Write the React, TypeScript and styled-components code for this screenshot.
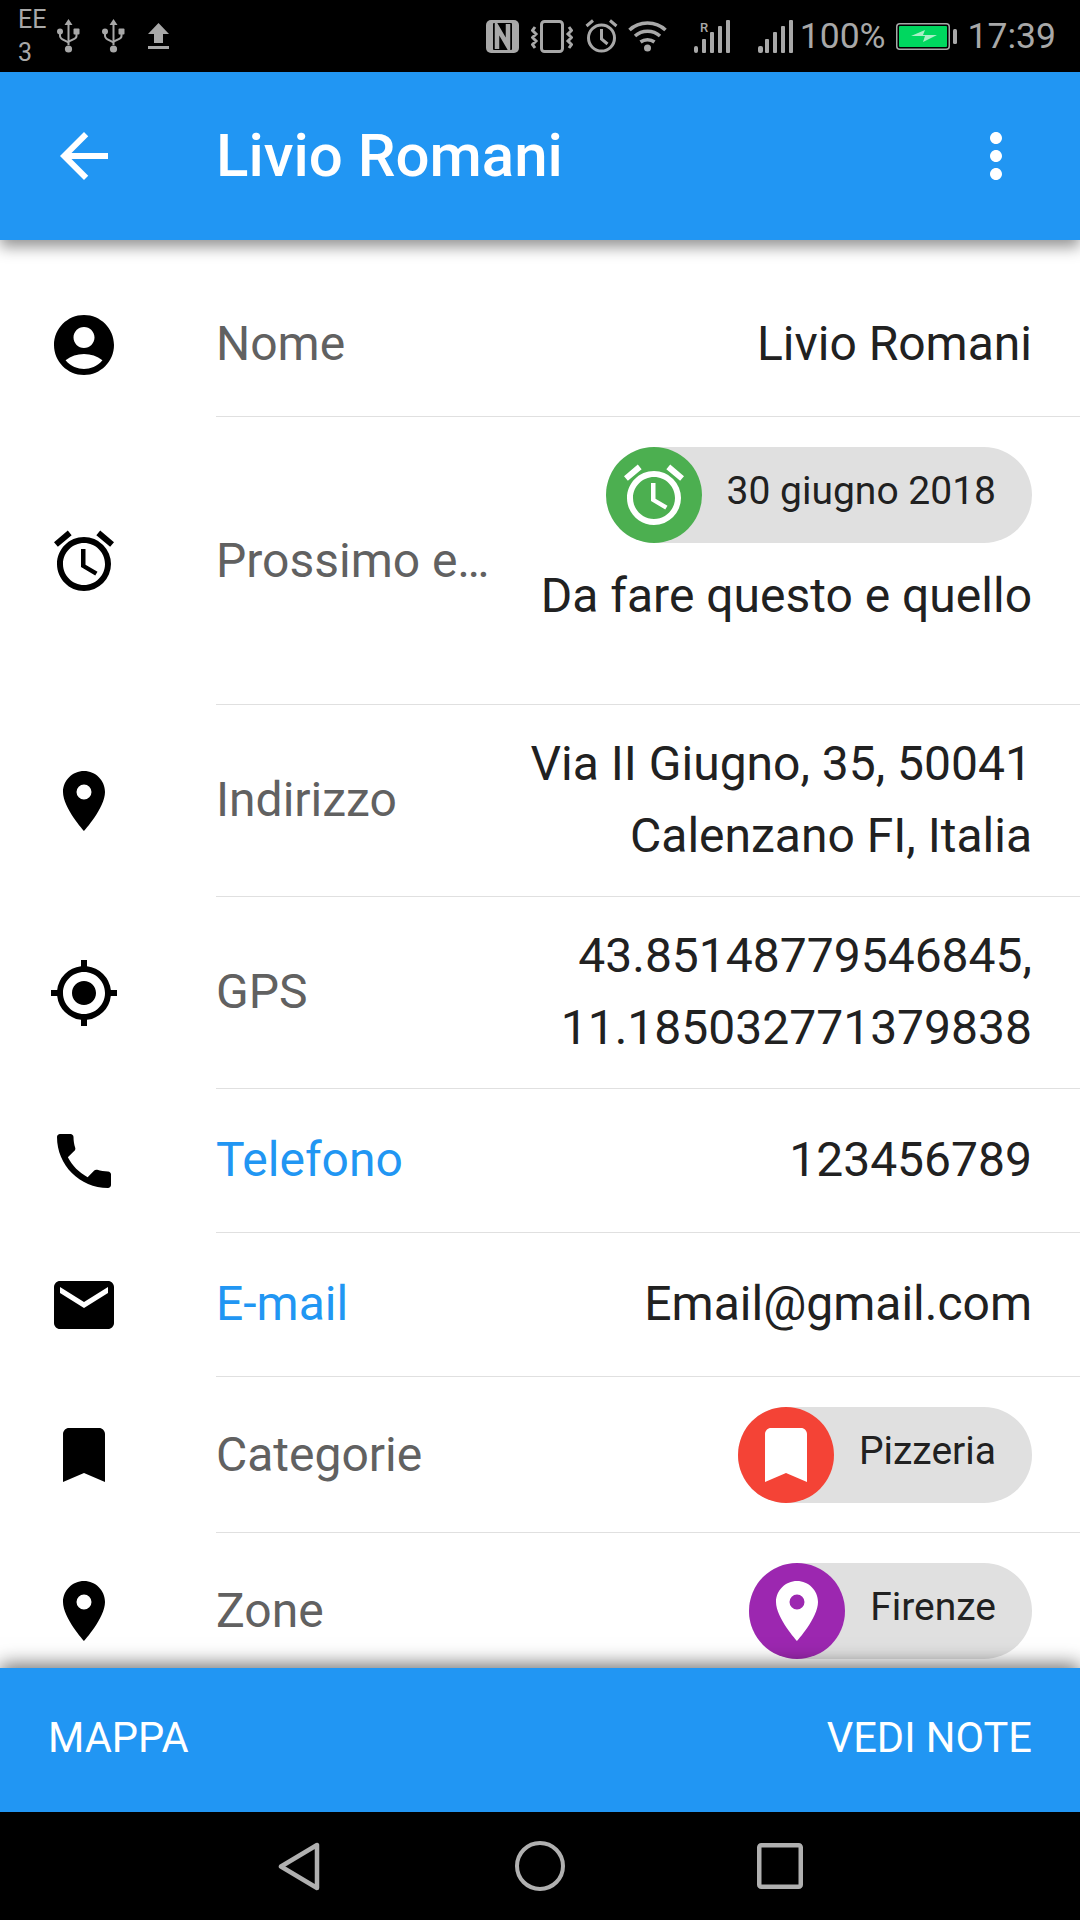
import React from 'react';
import styled, { createGlobalStyle } from 'styled-components';
import {
  MdAccessAlarm,
  MdAccountCircle,
  MdArrowBack,
  MdBookmark,
  MdEmail,
  MdGpsFixed,
  MdMoreVert,
  MdPhone,
  MdPlace,
} from 'react-icons/md';

const GlobalStyle = createGlobalStyle`
  html, body {
    margin: 0;
    padding: 0;
    background: #fff;
  }
  * {
    box-sizing: border-box;
  }
`;

const Screen = styled.div`
  width: 1080px;
  height: 1920px;
  display: flex;
  flex-direction: column;
  overflow: hidden;
  font-family: Roboto, 'Liberation Sans', sans-serif;
  background: #fff;
`;

const StatusBar = styled.div`
  height: 72px;
  flex: none;
  display: flex;
  align-items: center;
  justify-content: space-between;
  background: #000;
  color: #a8a8a8;
  padding: 0 24px 0 18px;
`;

const StatusGroup = styled.div`
  display: flex;
  align-items: center;
`;

const Carrier = styled.div`
  font-size: 25px;
  line-height: 33px;
  width: 39px;
`;

const StatusText = styled.span<{ $ml: number }>`
  font-size: 35.5px;
  line-height: 36px;
  margin-left: ${(p) => p.$ml}px;
`;

const StatusIcon = styled.svg<{ $ml: number }>`
  display: block;
  flex: none;
  margin-left: ${(p) => p.$ml}px;
`;

const AppBar = styled.header`
  height: 168px;
  flex: none;
  display: flex;
  align-items: center;
  background: #2196f3;
  color: #fff;
  padding: 0 48px;
  position: relative;
  z-index: 2;
  box-shadow: 0 7px 14px rgba(0, 0, 0, 0.42);
`;

const Title = styled.h1`
  flex: 1;
  margin: 0 0 0 96px;
  font-size: 60px;
  font-weight: 500;
  line-height: 72px;
`;

const List = styled.main`
  flex: 1;
  min-height: 0;
  overflow: hidden;
  padding-top: 32px;
`;

const Row = styled.div`
  display: flex;
  align-items: stretch;
`;

const IconCell = styled.div`
  width: 216px;
  flex: none;
  display: flex;
  align-items: center;
  padding-left: 48px;
  font-size: 72px;
  color: #000;

  svg {
    display: block;
  }
`;

const RowBody = styled.div<{ $pad: string; $last?: boolean }>`
  flex: 1;
  min-width: 0;
  display: flex;
  align-items: center;
  padding: ${(p) => p.$pad};
  padding-right: 48px;
  border-bottom: ${(p) => (p.$last ? 'none' : '1px solid #e0e0e0')};
`;

const Label = styled.div<{ $link?: boolean }>`
  width: 280px;
  flex: none;
  font-size: 48px;
  line-height: 72px;
  white-space: nowrap;
  overflow: hidden;
  text-overflow: ellipsis;
  color: ${(p) => (p.$link ? '#2196f3' : '#616161')};
`;

const Values = styled.div`
  flex: 1;
  min-width: 0;
  display: flex;
  flex-direction: column;
  align-items: flex-end;
  gap: 17px;
`;

const Value = styled.div`
  font-size: 48px;
  line-height: 72px;
  color: #212121;
  text-align: right;
`;

const EventNote = styled(Value)`
  margin-bottom: 42px;
`;

const Chip = styled.div`
  height: 96px;
  display: flex;
  align-items: center;
  border-radius: 48px;
  background: #e0e0e0;
  padding-right: 36px;
`;

const ChipAvatar = styled.div<{ $color: string }>`
  width: 96px;
  height: 96px;
  flex: none;
  display: flex;
  align-items: center;
  justify-content: center;
  border-radius: 50%;
  background: ${(p) => p.$color};
  color: #fff;
  font-size: 72px;
  margin-right: 25px;

  svg {
    display: block;
  }
`;

const ChipText = styled.span`
  font-size: 39px;
  line-height: 48px;
  color: #212121;
  padding-bottom: 8px;
  white-space: nowrap;
`;

const BottomBar = styled.footer`
  height: 144px;
  flex: none;
  display: flex;
  align-items: center;
  justify-content: space-between;
  background: #2196f3;
  color: #fff;
  padding: 0 48px 6px;
  font-size: 41.6px;
  position: relative;
  z-index: 2;
  box-shadow: 0 -4px 18px rgba(0, 0, 0, 0.55);
`;

const NavBar = styled.nav`
  height: 108px;
  flex: none;
  display: flex;
  align-items: center;
  background: #000;
  padding: 0 0 0 278px;
  position: relative;
  z-index: 3;
`;

const grey = '#a8a8a8';

const UsbIcon = ({ ml }: { ml: number }) => (
  <StatusIcon $ml={ml} width="23" height="34" viewBox="0 0 23 34" fill={grey}>
    <path d="M11.5 0l4 6h-3v20h-2V6h-3z" />
    <circle cx="11.5" cy="30" r="3.6" />
    <circle cx="3" cy="12.5" r="3" />
    <rect x="16.5" y="9.5" width="6" height="6" rx="1" />
    <path d="M2 14h2v2.5c0 1.5.8 2.3 2 3l5 2.500v2.300l-6-3C3 19.800 2 18.500 2 16.500zM18.500 14h2v3c0 1.800-1 3-2.800 3.800L12 23.500v-2.300l4.800-2.300c1.200-.6 1.700-1.200 1.700-2.400z" />
  </StatusIcon>
);

const StatusLeft = () => (
  <StatusGroup>
    <Carrier>
      EE
      <br />3
    </Carrier>
    <UsbIcon ml={0} />
    <UsbIcon ml={22} />
    <StatusIcon $ml={23} width="21" height="26" viewBox="0 0 21 26" fill={grey}>
      <path d="M10.500 0L21 11h-6v9H6v-9H0z" />
      <rect y="23" width="21" height="3" />
    </StatusIcon>
  </StatusGroup>
);

const StatusRight = () => (
  <StatusGroup>
    <StatusIcon $ml={0} width="33" height="33" viewBox="0 0 33 33">
      <rect width="33" height="33" rx="5" fill={grey} />
      <rect x="7" y="3" width="19" height="27" rx="1" fill="#000" />
      <path d="M11 29V7l11 19V4" stroke={grey} strokeWidth="4.500" fill="none" />
    </StatusIcon>
    <StatusIcon $ml={12} width="42" height="33" viewBox="0 0 42 33" fill="none" stroke={grey} strokeWidth="3">
      <rect x="10.500" y="1.500" width="21" height="30" rx="3" />
      <path d="M4 7L1.500 10.500 5 14l-3.500 3.500L5 21l-3.500 3.500L4 28M38 7l2.500 3.500L37 14l3.500 3.500L37 21l3.500 3.500L38 28" />
    </StatusIcon>
    <StatusIcon $ml={12} width="33" height="34" viewBox="0 0 33 34" fill="none" stroke={grey} strokeWidth="3">
      <circle cx="16.500" cy="19" r="13" />
      <path d="M16.500 10v10l6 5M1.500 7L8 1.500M31.500 7L25 1.500" />
    </StatusIcon>
    <StatusIcon $ml={10} width="39" height="32" viewBox="0 0 39 32" fill="none" stroke={grey} strokeWidth="3.500">
      <path d="M1.500 10C11 .5 28 .5 37.500 10M7 16c7-6.500 18-6.500 25 0M12.500 22c4-3 10-3 14 0" />
      <circle cx="19.500" cy="28" r="3.500" fill={grey} stroke="none" />
    </StatusIcon>
    <StatusIcon $ml={27} width="36" height="33" viewBox="0 0 36 33" fill={grey}>
      <text x="6" y="12" fontSize="13" fontWeight="500" fontFamily="Roboto, sans-serif">R</text>
      <rect y="26" width="4" height="7" rx="2" />
      <rect x="8" y="19" width="4" height="14" rx="1" />
      <rect x="16" y="12" width="4" height="21" rx="1" />
      <rect x="24" y="6" width="4" height="27" rx="1" />
      <rect x="32" y="0" width="4" height="33" rx="1" />
    </StatusIcon>
    <StatusIcon $ml={28} width="35" height="33" viewBox="0 0 35 33" fill={grey}>
      <rect y="26" width="5" height="7" rx="2" />
      <rect x="7" y="19" width="4" height="14" rx="1" />
      <rect x="15" y="12" width="4" height="21" rx="1" />
      <rect x="23" y="6" width="4" height="27" rx="1" />
      <rect x="31" y="0" width="4" height="33" rx="1" />
    </StatusIcon>
    <StatusText $ml={7}>100%</StatusText>
    <StatusIcon $ml={10} width="61" height="27" viewBox="0 0 61 27" fill="none">
      <rect x="0.750" y="0.750" width="52.500" height="25.500" rx="3" stroke={grey} strokeWidth="1.500" />
      <rect x="3" y="3" width="48" height="21" rx="1" fill="#00d75f" />
      <path d="M15 13l14-6-2 5h14l-14 7 2-6z" fill="#a8f0c6" />
      <rect x="57" y="6" width="4" height="15" rx="1.500" fill={grey} />
    </StatusIcon>
    <StatusText $ml={11}>17:39</StatusText>
  </StatusGroup>
);

const NavIcons = () => (
  <>
    <StatusIcon $ml={0} width="42" height="49" viewBox="0 0 42 49" fill="none" stroke="#b0b0b0" strokeWidth="4.500" strokeLinejoin="round">
      <path d="M39 3v43L3 24.500z" />
    </StatusIcon>
    <StatusIcon $ml={195} width="50" height="50" viewBox="0 0 50 50" fill="none" stroke="#b0b0b0" strokeWidth="4">
      <circle cx="25" cy="25" r="23" />
    </StatusIcon>
    <StatusIcon $ml={192} width="46" height="46" viewBox="0 0 46 46" fill="none" stroke="#b0b0b0" strokeWidth="4.500">
      <rect x="2.250" y="2.250" width="41.500" height="41.500" rx="2" />
    </StatusIcon>
  </>
);

export default function App() {
  return (
    <Screen>
      <GlobalStyle />
      <StatusBar>
        <StatusLeft />
        <StatusRight />
      </StatusBar>
      <AppBar>
        <MdArrowBack size={72} />
        <Title>Livio Romani</Title>
        <MdMoreVert size={72} />
      </AppBar>
      <List>
        <Row>
          <IconCell><MdAccountCircle /></IconCell>
          <RowBody $pad="36px 0">
            <Label>Nome</Label>
            <Values><Value>Livio Romani</Value></Values>
          </RowBody>
        </Row>
        <Row>
          <IconCell><MdAccessAlarm /></IconCell>
          <RowBody $pad="30px 0">
            <Label>Prossimo evento</Label>
            <Values>
              <Chip>
                <ChipAvatar $color="#4caf50"><MdAccessAlarm /></ChipAvatar>
                <ChipText>30 giugno 2018</ChipText>
              </Chip>
              <EventNote>Da fare questo e quello</EventNote>
            </Values>
          </RowBody>
        </Row>
        <Row>
          <IconCell><MdPlace /></IconCell>
          <RowBody $pad="23px 0 24px">
            <Label>Indirizzo</Label>
            <Values><Value>Via II Giugno, 35, 50041 Calenzano FI, Italia</Value></Values>
          </RowBody>
        </Row>
        <Row>
          <IconCell><MdGpsFixed /></IconCell>
          <RowBody $pad="23px 0 24px">
            <Label>GPS</Label>
            <Values><Value>43.85148779546845, 11.185032771379838</Value></Values>
          </RowBody>
        </Row>
        <Row>
          <IconCell><MdPhone /></IconCell>
          <RowBody $pad="35px 0 36px">
            <Label $link>Telefono</Label>
            <Values><Value>123456789</Value></Values>
          </RowBody>
        </Row>
        <Row>
          <IconCell><MdEmail /></IconCell>
          <RowBody $pad="35px 0 36px">
            <Label $link>E-mail</Label>
            <Values><Value>Email@gmail.com</Value></Values>
          </RowBody>
        </Row>
        <Row>
          <IconCell><MdBookmark /></IconCell>
          <RowBody $pad="30px 0 29px">
            <Label>Categorie</Label>
            <Values>
              <Chip>
                <ChipAvatar $color="#f44336"><MdBookmark /></ChipAvatar>
                <ChipText>Pizzeria</ChipText>
              </Chip>
            </Values>
          </RowBody>
        </Row>
        <Row>
          <IconCell><MdPlace /></IconCell>
          <RowBody $pad="30px 0 29px" $last>
            <Label>Zone</Label>
            <Values>
              <Chip>
                <ChipAvatar $color="#9c27b0"><MdPlace /></ChipAvatar>
                <ChipText>Firenze</ChipText>
              </Chip>
            </Values>
          </RowBody>
        </Row>
      </List>
      <BottomBar>
        <span>MAPPA</span>
        <span>VEDI NOTE</span>
      </BottomBar>
      <NavBar>
        <NavIcons />
      </NavBar>
    </Screen>
  );
}
